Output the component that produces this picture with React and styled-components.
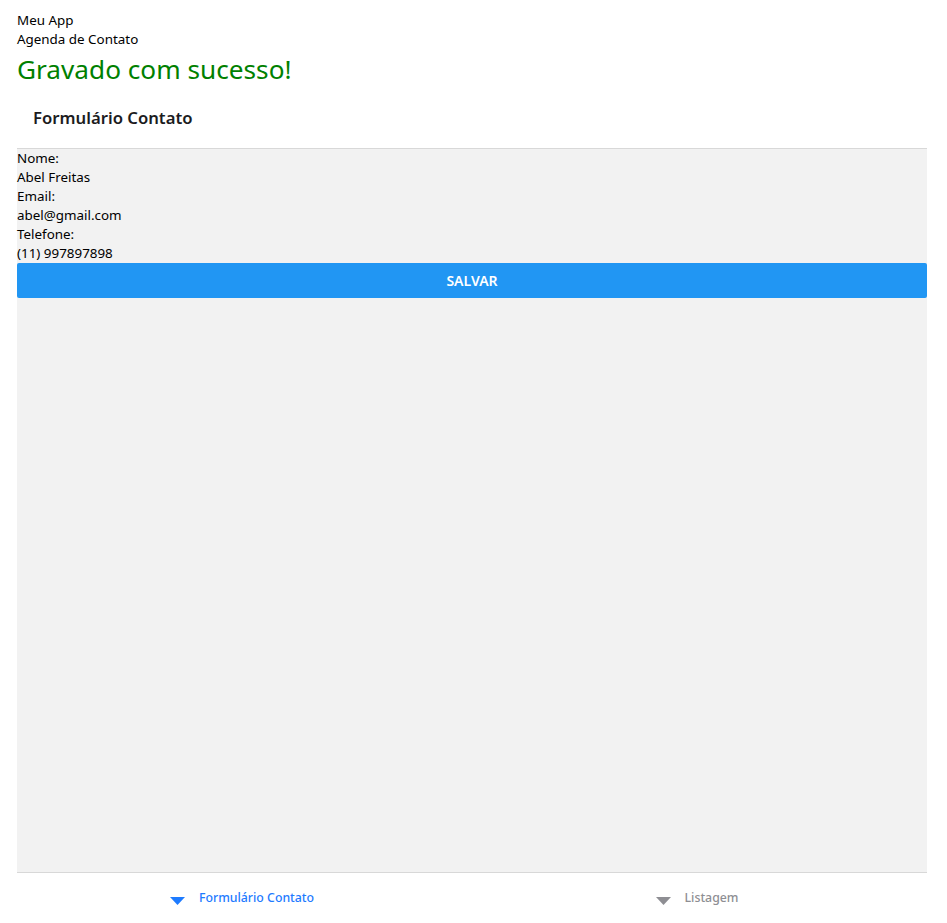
import styled, { createGlobalStyle } from "styled-components";

const GlobalStyle = createGlobalStyle`
  html, body {
    margin: 0;
    padding: 0;
    background: #ffffff;
  }
  body {
    font-family: "Noto Sans", "Open Sans", sans-serif;
    color: #000000;
  }
`;

const Page = styled.div`
  display: flex;
  flex-direction: column;
  height: 923px;
  padding: 11px 20px 0 17px;
  box-sizing: border-box;
`;

const Line = styled.div`
  font-size: 13.4px;
  line-height: 19px;
  white-space: nowrap;
`;

const Message = styled.div`
  font-size: 26.2px;
  line-height: 34px;
  color: #008000;
  margin-top: 3px;
`;

const Header = styled.div`
  display: flex;
  align-items: center;
  height: 62px;
  padding-left: 16px;
  border-bottom: 1px solid #d8d8d8;
  font-size: 16.7px;
  font-weight: 600;
  color: #1c1c1e;
`;

const Screen = styled.div`
  flex: 1;
  display: flex;
  flex-direction: column;
  background: #f2f2f2;
`;

const SaveButton = styled.button`
  height: 35px;
  border: none;
  border-radius: 2px;
  background: #2196f3;
  color: #ffffff;
  font-family: inherit;
  font-size: 14px;
  font-weight: 600;
  text-transform: uppercase;
  cursor: pointer;
`;

const TabBar = styled.div`
  display: flex;
  height: 50px;
  border-top: 1px solid #d8d8d8;
  background: #ffffff;
`;

const Tab = styled.div`
  flex: 1;
  display: flex;
  align-items: center;
  justify-content: center;
  gap: 14px;
  font-size: 12.3px;
  font-weight: 500;
  color: ${(p) => (p.$active ? "#1e7bff" : "#8e8e93")};
`;

const TabIcon = styled.svg`
  width: 15px;
  height: 8px;
  margin-top: 6px;
  fill: currentColor;
`;

const TabLabel = styled.span`
  margin-top: -2px;
  margin-right: 5px;
`;

function Caret() {
  return (
    <TabIcon viewBox="0 0 15 8">
      <polygon points="0,0 15,0 7.5,8" />
    </TabIcon>
  );
}

export default function App() {
  const fields = [
    ["Nome:", "Abel Freitas"],
    ["Email:", "abel@gmail.com"],
    ["Telefone:", "(11) 997897898"],
  ];

  return (
    <>
      <GlobalStyle />
      <Page>
        <Line>Meu App</Line>
        <Line>Agenda de Contato</Line>
        <Message>Gravado com sucesso!</Message>
        <Header>Formulário Contato</Header>
        <Screen>
          {fields.map(([label, value]) => (
            <div key={label}>
              <Line>{label}</Line>
              <Line>{value}</Line>
            </div>
          ))}
          <SaveButton>Salvar</SaveButton>
        </Screen>
        <TabBar>
          <Tab $active>
            <Caret />
            <TabLabel>Formulário Contato</TabLabel>
          </Tab>
          <Tab>
            <Caret />
            <TabLabel>Listagem</TabLabel>
          </Tab>
        </TabBar>
      </Page>
    </>
  );
}
